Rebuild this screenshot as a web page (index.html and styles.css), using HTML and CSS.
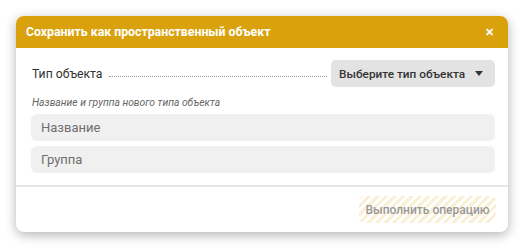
FILE: index.html
```html
<!doctype html>
<html>
<head>
    <title>Сохранить как пространственный объект</title>
    <link rel="stylesheet" href="styles.css">
</head>
<body>
<div class="dialog">
    <div class="dialog-header">
        <span class="dialog-title">Сохранить как пространственный объект</span>
        <span class="dialog-close">&#x2715;</span>
    </div>
    <div class="dialog-body">
        <div class="type-row">
            <span class="type-label">Тип объекта</span>
            <span class="leader"></span>
            <button class="type-select">Выберите тип объекта <span class="caret"></span></button>
        </div>
        <div class="hint">Название и группа нового типа объекта</div>
        <div class="field">Название</div>
        <div class="field">Группа</div>
    </div>
    <div class="dialog-footer">
        <button class="run-btn">Выполнить операцию</button>
    </div>
</div>
</body>
</html>
```

FILE: styles.css
```css
body {
    background: white;
    margin: 0;
    padding: 16px;
    font-family: Roboto, "Noto Sans", sans-serif;
    color: #323232;
}

.dialog {
    width: 492px;
    background: white;
    border-radius: 8px;
    box-shadow: 0 3px 12px rgba(0, 0, 0, 0.3);
    overflow: hidden;
}

.dialog-header {
    height: 32px;
    background: #d9a20c;
    display: flex;
    align-items: center;
    justify-content: space-between;
    padding: 0 14px 0 10px;
}

.dialog-title {
    color: white;
    font-weight: 700;
    font-size: 12.3px;
}

.dialog-close {
    color: white;
    font-size: 11px;
    font-weight: 700;
}

.dialog-body {
    padding: 12px 13px 12px 15px;
    border-bottom: 2px solid #e6e6e6;
}

.type-row {
    display: flex;
    align-items: center;
}

.type-label {
    font-size: 12.2px;
    padding-left: 1px;
}

.leader {
    flex: 1;
    border-bottom: 1px dotted #999;
    margin: 6px 4px 0 7px;
}

.type-select {
    height: 27px;
    width: 164px;
    border: none;
    border-radius: 5px;
    background: #e3e3e3;
    font-family: inherit;
    font-size: 11.8px;
    font-weight: 500;
    color: #333;
    white-space: nowrap;
    display: flex;
    align-items: center;
    justify-content: space-between;
    padding: 0 12px 0 8px;
}

.caret {
    width: 0;
    height: 0;
    border-left: 4px solid transparent;
    border-right: 4px solid transparent;
    border-top: 5px solid #333;
}

.hint {
    font-size: 10.3px;
    line-height: 12px;
    font-style: italic;
    color: #666;
    margin: 10px 0 5px 1px;
}

.field {
    height: 27px;
    background: #f0f0f0;
    border-radius: 6px;
    display: flex;
    align-items: center;
    padding-left: 10px;
    font-size: 13px;
    color: #6f6f6f;
    margin-bottom: 5px;
}

.field:last-child {
    margin-bottom: 0;
}

.dialog-footer {
    height: 45px;
    display: flex;
    align-items: center;
    justify-content: flex-end;
    padding-right: 12px;
}

.run-btn {
    height: 27px;
    width: 137px;
    border: none;
    border-radius: 5px;
    font-family: inherit;
    font-size: 12px;
    font-weight: 500;
    color: #9a9a9a;
    white-space: nowrap;
    background: repeating-linear-gradient(135deg, #fbefd5 0 3px, #ffffff 3px 6px);
}
```
